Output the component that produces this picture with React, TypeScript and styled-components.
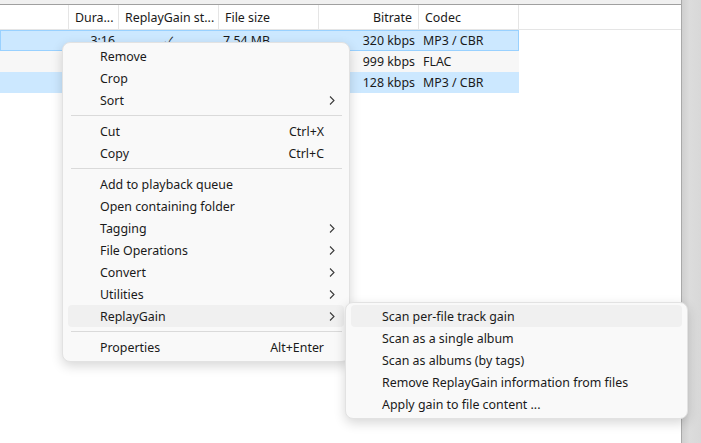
import React from 'react';
import styled, { createGlobalStyle } from 'styled-components';

const Global = createGlobalStyle`
  html, body { margin: 0; padding: 0; background: #ffffff; overflow: hidden; }
  body {
    font-family: "Noto Sans", "Noto Sans CJK SC", sans-serif;
    font-size: 12.4px;
    color: #1a1a1a;
  }
`;

const Window = styled.div`
  position: relative;
  display: flex;
  width: 701px;
  height: 443px;
  overflow: hidden;
  background: #ffffff;
`;

const Main = styled.div`
  flex: 0 0 682px;
  display: flex;
  flex-direction: column;
  border-right: 1px solid #a9a9a9;
  box-sizing: border-box;
`;

const SideStrip = styled.div`
  flex: 1;
  background: linear-gradient(to right, #cfcfcf, #dcdcdc 40%, #d8d8d8);
`;

const TopStrip = styled.div`
  height: 4px;
  background: #f0f0f0;
  border-bottom: 1px solid #a0a0a0;
`;

const Grid = styled.div<{ $header?: boolean }>`
  display: grid;
  grid-template-columns: 69px 50px 100px 100px 100px 100px 1fr;
  height: ${p => (p.$header ? '24px' : '21px')};
`;

const HeaderRow = styled(Grid)`
  border-bottom: 1px solid #e5e5e5;
`;

const HeaderCell = styled.div<{ $align?: 'left' | 'right' }>`
  display: flex;
  align-items: center;
  justify-content: ${p => (p.$align === 'right' ? 'flex-end' : 'flex-start')};
  padding: 0 6px;
  border-right: 1px solid #e5e5e5;
  white-space: nowrap;
  overflow: hidden;
  &:last-child { border-right: none; }
`;

const Row = styled(Grid)<{ $tone: 'selected' | 'focused' | 'alt' }>`
  width: 519px;
  box-sizing: border-box;
  background: ${p => (p.$tone === 'alt' ? '#f7f7f7' : '#cce8ff')};
  border: ${p => (p.$tone === 'focused' ? '1px solid #99d1ff' : 'none')};
  grid-template-columns: ${p =>
    p.$tone === 'focused' ? '68px 50px 100px 100px 100px 99px' : '69px 50px 100px 100px 100px 100px'};
  align-items: center;
`;

const Cell = styled.div<{ $align?: 'left' | 'right' | 'center' }>`
  padding: 0 4px;
  white-space: nowrap;
  text-align: ${p => p.$align || 'left'};
`;

const Menu = styled.div<{ $x: number; $y: number; $w: number }>`
  position: absolute;
  left: ${p => p.$x}px;
  top: ${p => p.$y}px;
  width: ${p => p.$w}px;
  box-sizing: border-box;
  padding: 2px 0 3px;
  background: #f9f9f9;
  border: 1px solid #e2e2e2;
  border-radius: 8px;
  box-shadow: 0 4px 12px rgba(0, 0, 0, 0.16);
`;

const Item = styled.div<{ $active?: boolean; $indent: number }>`
  display: flex;
  align-items: center;
  height: 22px;
  margin: 0 5px;
  padding-left: ${p => p.$indent}px;
  padding-right: 20px;
  border-radius: 4px;
  background: ${p => (p.$active ? '#f0f0f0' : 'transparent')};
  position: relative;
  white-space: nowrap;
`;

const Label = styled.span`
  flex: 1;
`;

const Shortcut = styled.span`
  color: #1a1a1a;
`;

const Chevron = styled.svg`
  position: absolute;
  right: 9px;
  top: 7px;
`;

const Separator = styled.div`
  height: 1px;
  margin: 4px 7px 4px 8px;
  background: #dadada;
`;

type Entry =
  | { label: string; shortcut?: string; sub?: boolean; active?: boolean }
  | 'sep';

const mainItems: Entry[] = [
  { label: 'Remove' },
  { label: 'Crop' },
  { label: 'Sort', sub: true },
  'sep',
  { label: 'Cut', shortcut: 'Ctrl+X' },
  { label: 'Copy', shortcut: 'Ctrl+C' },
  'sep',
  { label: 'Add to playback queue' },
  { label: 'Open containing folder' },
  { label: 'Tagging', sub: true },
  { label: 'File Operations', sub: true },
  { label: 'Convert', sub: true },
  { label: 'Utilities', sub: true },
  { label: 'ReplayGain', sub: true, active: true },
  'sep',
  { label: 'Properties', shortcut: 'Alt+Enter' },
];

const subItems: Entry[] = [
  { label: 'Scan per-file track gain', active: true },
  { label: 'Scan as a single album' },
  { label: 'Scan as albums (by tags)' },
  { label: 'Remove ReplayGain information from files' },
  { label: 'Apply gain to file content ...' },
];

const ChevronIcon = () => (
  <Chevron width="6" height="9" viewBox="0 0 6 9">
    <path d="M1 0.5 L5 4.5 L1 8.5" fill="none" stroke="#3a3a3a" strokeWidth="1.1" />
  </Chevron>
);

const MenuList: React.FC<{ items: Entry[]; indent: number }> = ({ items, indent }) => (
  <>
    {items.map((it, i) =>
      it === 'sep' ? (
        <Separator key={i} />
      ) : (
        <Item key={i} $active={it.active} $indent={indent}>
          <Label>{it.label}</Label>
          {it.shortcut && <Shortcut>{it.shortcut}</Shortcut>}
          {it.sub && <ChevronIcon />}
        </Item>
      )
    )}
  </>
);

const rows = [
  { tone: 'focused' as const, dur: '3:16', rg: '✓', size: '7.54 MB', bitrate: '320 kbps', codec: 'MP3 / CBR' },
  { tone: 'alt' as const, dur: '', rg: '', size: '', bitrate: '999 kbps', codec: 'FLAC' },
  { tone: 'selected' as const, dur: '', rg: '', size: '', bitrate: '128 kbps', codec: 'MP3 / CBR' },
];

export default function App() {
  return (
    <>
      <Global />
      <Window>
        <Main>
          <TopStrip />
          <HeaderRow $header>
            <HeaderCell />
            <HeaderCell>Dura...</HeaderCell>
            <HeaderCell>ReplayGain st...</HeaderCell>
            <HeaderCell>File size</HeaderCell>
            <HeaderCell $align="right">Bitrate</HeaderCell>
            <HeaderCell>Codec</HeaderCell>
            <HeaderCell />
          </HeaderRow>
          {rows.map((r, i) => (
            <Row key={i} $tone={r.tone}>
              <Cell />
              <Cell $align="right">{r.dur}</Cell>
              <Cell $align="center">{r.rg}</Cell>
              <Cell>{r.size}</Cell>
              <Cell $align="right">{r.bitrate}</Cell>
              <Cell>{r.codec}</Cell>
            </Row>
          ))}
        </Main>
        <SideStrip />
        <Menu $x={62} $y={42} $w={288}>
          <MenuList items={mainItems} indent={32} />
        </Menu>
        <Menu $x={345} $y={302} $w={343}>
          <MenuList items={subItems} indent={31} />
        </Menu>
      </Window>
    </>
  );
}
